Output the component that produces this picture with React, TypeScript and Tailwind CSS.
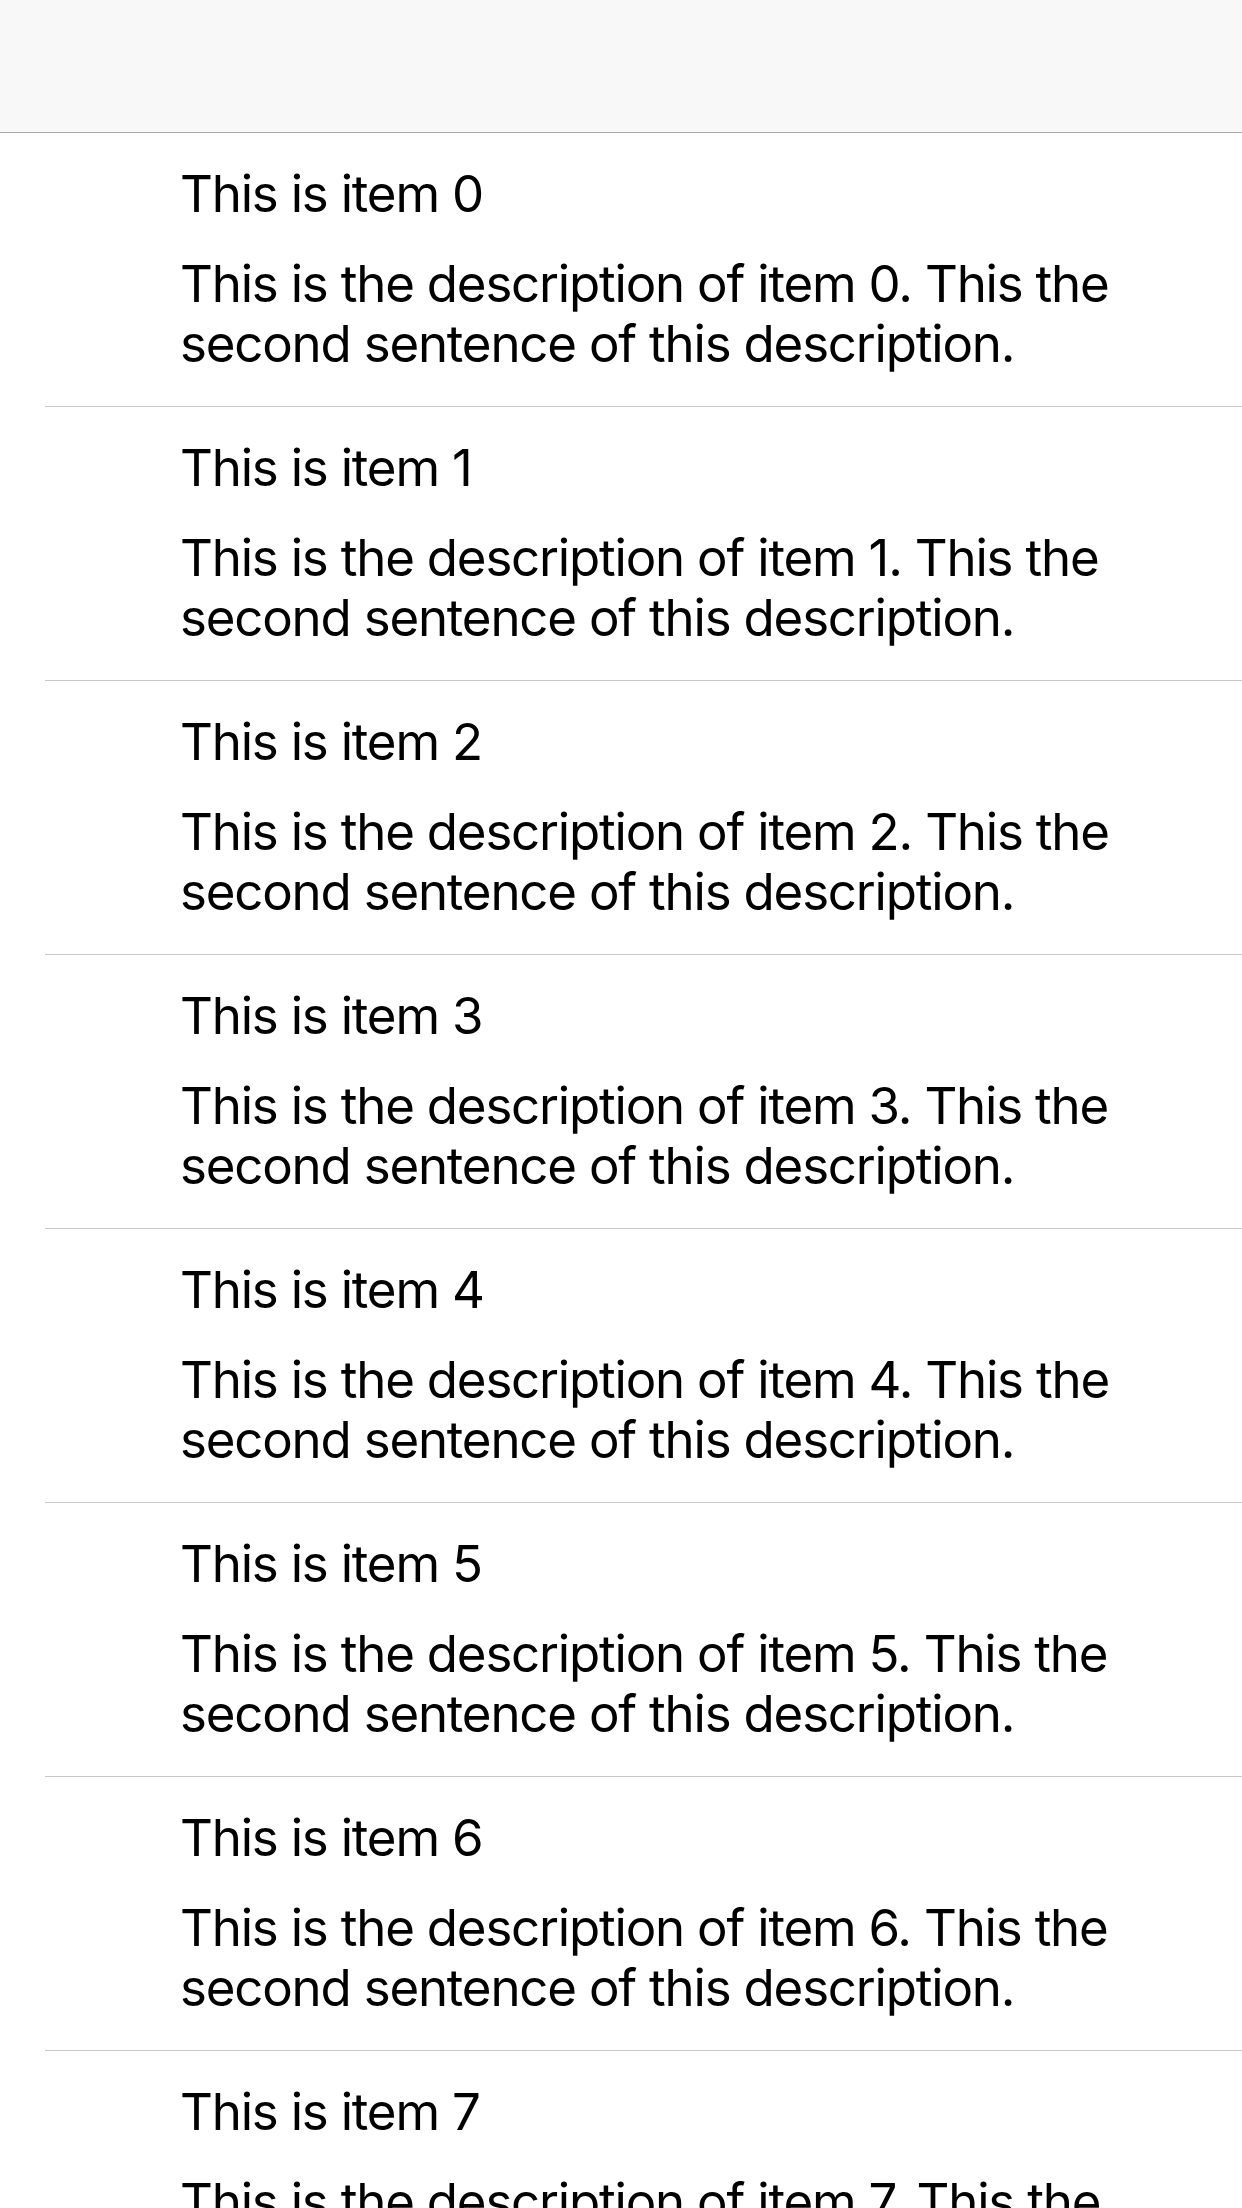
const items = Array.from({ length: 8 }, (_, i) => ({
  id: i,
  title: `This is item ${i}`,
  description: `This is the description of item ${i}. This the second sentence of this description.`,
}))

export default function App() {
  return (
    <div
      className="w-[1242px] h-[2208px] overflow-hidden bg-white text-black"
      style={{ fontFamily: 'Inter, "Liberation Sans", sans-serif' }}
    >
      {/* nav bar */}
      <div className="h-[133px] bg-[#f8f8f8] border-b border-[#a9a9a9]" />

      {/* list */}
      <ul>
        {items.map((item) => (
          <li key={item.id} className="pl-[45px]">
            <div className="border-b border-[#c8c7cc] pl-[135px] pr-[60px] pt-[31px] pb-[32px]">
              <p className="text-[51px] leading-[60px] tracking-[-1.2px]">{item.title}</p>
              <p className="mt-[30px] text-[51px] leading-[60px] tracking-[-1.2px]">{item.description}</p>
            </div>
          </li>
        ))}
      </ul>
    </div>
  )
}
